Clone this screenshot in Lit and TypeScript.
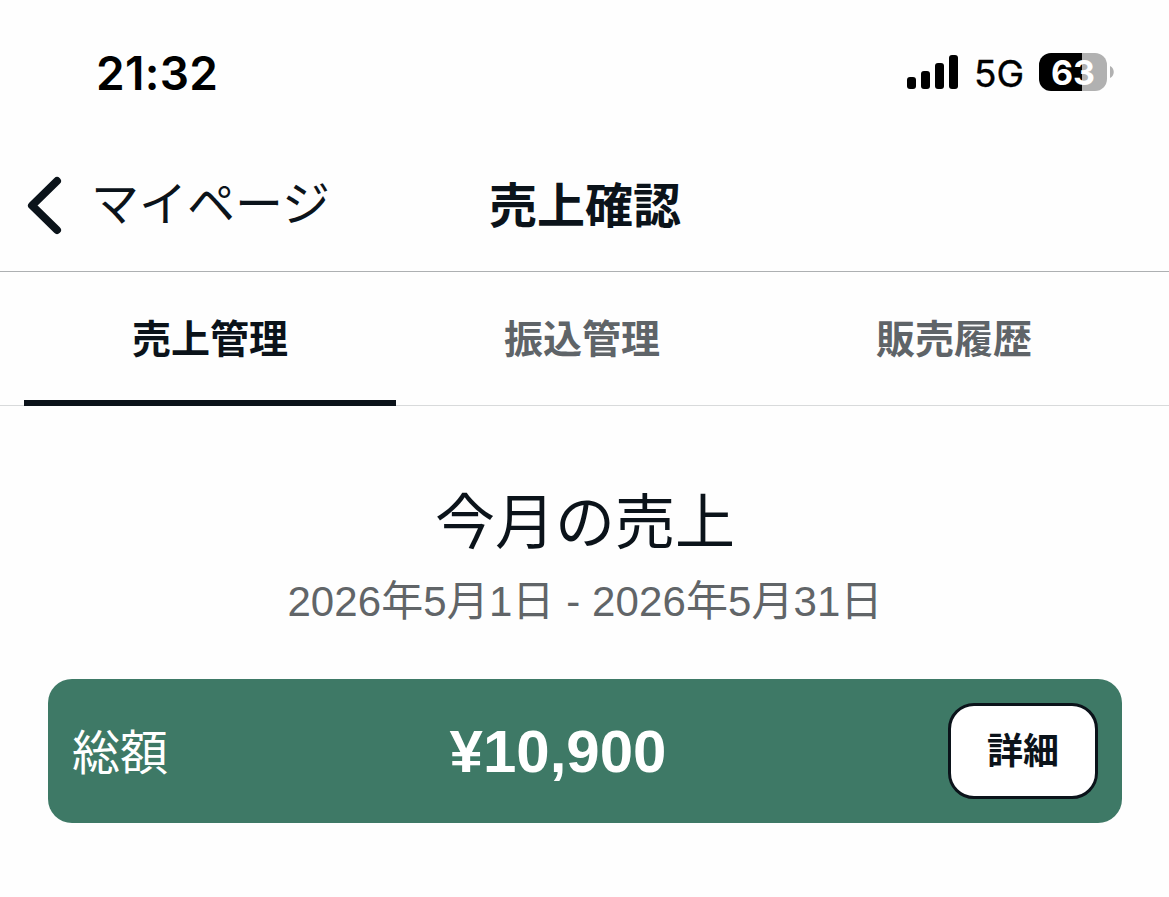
import { LitElement, html, css } from "lit";
import { customElement, state } from "lit/decorators.js";
import { classMap } from "lit/directives/class-map.js";

@customElement("status-bar")
class StatusBar extends LitElement {
  static styles = css`
    :host { display: flex; box-sizing: border-box; height: 144px; padding: 0 54px 0 96px; align-items: center; justify-content: space-between; font-family: Inter, sans-serif; color: #000; }
    .time { font-size: 46px; font-weight: 600; line-height: 56px; letter-spacing: 0.3px; padding-top: 2px; }
    .right { display: flex; align-items: center; }
    .signal { display: block; }
    .network { font-size: 37px; line-height: 46px; margin: 4px 0 0 16px; width: 49px; white-space: nowrap; -webkit-text-stroke: 0.4px #000; }
    .battery { box-sizing: border-box; margin-left: 16px; width: 68px; height: 38px; border-radius: 12px; background: linear-gradient(90deg, #000 43px, #b1b1b1 43px); color: #fff; font-size: 34px; font-weight: 700; line-height: 39px; text-align: center; }
    .cap { display: block; margin-left: 3px; }
  `;
  render() {
    return html`
      <span class="time">21:32</span>
      <div class="right">
        <svg class="signal" width="51" height="36" viewBox="0 0 51 36">
          <rect x="0" y="23" width="9" height="12" rx="3" />
          <rect x="14" y="17" width="9" height="18" rx="3" />
          <rect x="28" y="9" width="9" height="26" rx="3" />
          <rect x="42" y="1" width="9" height="34" rx="3" />
        </svg>
        <span class="network">5G</span>
        <div class="battery">63</div>
        <svg class="cap" width="5" height="12" viewBox="0 0 5 12"><path d="M0 0C5 2 5 10 0 12Z" fill="#b1b1b1" /></svg>
      </div>
    `;
  }
}

@customElement("app-root")
class AppRoot extends LitElement {
  @state() private active = 0;
  private tabs = ["売上管理", "振込管理", "販売履歴"];

  static styles = css`
    :host { display: block; height: 897px; overflow: hidden; background: #fefefe; color: #0b131a; font-family: "Liberation Sans", "Noto Sans CJK JP", sans-serif; }
    .nav { box-sizing: border-box; height: 128px; display: grid; grid-template-columns: 1fr auto 1fr; align-items: center; border-bottom: 1px solid #adb0b2; padding-bottom: 4px; }
    .back { display: flex; align-items: center; padding: 0 0 2px 27px; }
    .chevron { display: block; }
    .back-label { font-size: 48px; line-height: 70px; margin-left: 26px; white-space: nowrap; }
    .title { margin: 0; font-size: 48px; line-height: 70px; font-weight: 700; padding: 2px 0 0 1px; }
    .tabs { box-sizing: border-box; height: 134px; display: grid; grid-template-columns: repeat(3, 372px); padding-left: 24px; box-shadow: inset 0 -1px #d8dadb; }
    .tab { box-sizing: border-box; display: flex; justify-content: center; align-items: center; border-bottom: 6px solid transparent; font-size: 39px; line-height: 58px; font-weight: 700; color: #5f6468; padding-top: 8px; }
    .tab.on { color: #0b131a; border-color: #0b131a; }
    .summary { padding: 74px 47px 0 48px; text-align: center; }
    .heading { margin: 0; font-size: 60px; font-weight: 400; line-height: 88px; }
    .period { margin: 3px 0 0; font-size: 42px; line-height: 62px; color: #616568; white-space: nowrap; letter-spacing: 0.1px; }
    .card { box-sizing: border-box; margin-top: 46px; height: 144px; border-radius: 24px; background: #3e7966; color: #fff; display: flex; align-items: center; justify-content: space-between; padding: 0 24px; }
    .label { font-size: 48px; line-height: 70px; padding-top: 5px; }
    .amount { font-size: 60px; line-height: 70px; font-weight: 700; padding-top: 2px; }
    .detail { box-sizing: border-box; width: 150px; height: 96px; padding: 0 0 6px; border: 3px solid #0b131a; border-radius: 26px; background: #fff; color: #0b131a; font: 700 36px/54px "Noto Sans CJK JP", sans-serif; }
  `;

  render() {
    return html`
      <status-bar></status-bar>
      <header class="nav">
        <div class="back">
          <svg class="chevron" width="38" height="60" viewBox="0 0 38 60" fill="none" stroke="#0b131a" stroke-width="8" stroke-linecap="round" stroke-linejoin="round">
            <path d="M30 6L5 30.5L30 55" />
          </svg>
          <span class="back-label">マイページ</span>
        </div>
        <h1 class="title">売上確認</h1>
      </header>
      <nav class="tabs">
        ${this.tabs.map((t, i) => html`<div class=${classMap({ tab: true, on: i === this.active })} @click=${() => (this.active = i)}>${t}</div>`)}
      </nav>
      <section class="summary">
        <h2 class="heading">今月の売上</h2>
        <p class="period">2026年5月1日 - 2026年5月31日</p>
        <div class="card">
          <span class="label">総額</span>
          <span class="amount">¥10,900</span>
          <button class="detail">詳細</button>
        </div>
      </section>
    `;
  }
}
